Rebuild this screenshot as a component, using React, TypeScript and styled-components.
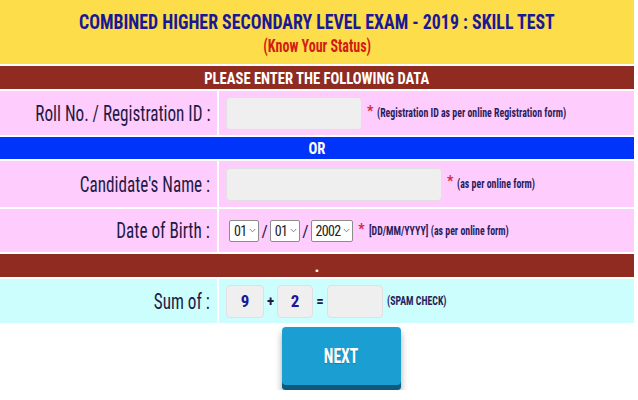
import styled, { createGlobalStyle } from "styled-components";

const GlobalStyle = createGlobalStyle`
  body {
    margin: 0;
    background: #ffffff;
    font-family: "Roboto", "Liberation Sans", sans-serif;
    font-stretch: 75%;
  }
`;

const colors = {
  yellow: "#fedd4b",
  brown: "#8f2b21",
  pink: "#ffccfe",
  blue: "#0034fb",
  cyan: "#ccfefe",
  navy: "#1a1896",
  labelText: "#221a44",
  hintText: "#2b1d5c",
  red: "#d21c12",
  star: "#d8263e",
};

// the screenshot squeezes glyphs horizontally, so every text run is narrowed
const Squeeze = styled.span<{ $origin?: string; $sx?: number }>`
  display: inline-block;
  white-space: nowrap;
  transform: scaleX(${(p) => p.$sx ?? 0.78});
  transform-origin: ${(p) => p.$origin ?? "center"};
`;

const Page = styled.div`
  width: 634px;
  display: flex;
  flex-direction: column;
  gap: 2px;
`;

const Banner = styled.header`
  height: 64px;
  box-sizing: border-box;
  padding-top: 10px;
  background: ${colors.yellow};
  display: flex;
  flex-direction: column;
  align-items: center;
`;

const Title = styled.h1`
  margin: 0;
  font-size: 21px;
  font-weight: bold;
  color: ${colors.navy};
  line-height: 24px;
`;

const SubTitle = styled.div`
  margin-top: 2px;
  font-size: 18px;
  font-weight: bold;
  color: ${colors.red};
  line-height: 20px;
`;

const Bar = styled.div<{ $bg: string; $h: number }>`
  height: ${(p) => p.$h}px;
  background: ${(p) => p.$bg};
  color: #ffffff;
  font-weight: bold;
  font-size: 17px;
  display: flex;
  align-items: center;
  justify-content: center;
`;

const Row = styled.div<{ $h: number }>`
  display: grid;
  grid-template-columns: 217px 1fr;
  column-gap: 2px;
  height: ${(p) => p.$h}px;
`;

const LabelCell = styled.div<{ $bg: string }>`
  background: ${(p) => p.$bg};
  display: flex;
  align-items: center;
  justify-content: flex-end;
  padding-right: 7px;
  font-size: 22px;
  color: ${colors.labelText};
`;

const FieldCell = styled.div<{ $bg: string }>`
  background: ${(p) => p.$bg};
  display: flex;
  align-items: center;
  padding-left: 7px;
  gap: 4px;
`;

const TextInput = styled.div<{ $w: number }>`
  width: ${(p) => p.$w}px;
  height: 33px;
  box-sizing: border-box;
  background: #efefef;
  border: 1px solid #e2dfe2;
  border-radius: 4px;
`;

const Star = styled.span`
  color: ${colors.star};
  font-size: 14px;
  font-weight: bold;
  align-self: flex-start;
  margin: 12px 0 0 1px;
`;

const Hint = styled.span`
  font-size: 12px;
  font-weight: bold;
  color: ${colors.hintText};
`;

const DateGroup = styled.div`
  display: flex;
  align-items: center;
  gap: 3px;
  margin-left: 3px;
`;

const Select = styled.div`
  height: 22px;
  box-sizing: border-box;
  background: #ffffff;
  border: 1px solid #8c8c8c;
  border-radius: 2px;
  display: flex;
  align-items: center;
  gap: 3px;
  padding: 0 2px 0 4px;
  font-size: 14px;
  letter-spacing: -0.7px;
  color: #222222;
`;

const Slash = styled.span`
  font-size: 17px;
  color: ${colors.labelText};
  margin: 0 -1px;
`;

const SumGroup = styled.div`
  display: flex;
  align-items: center;
  gap: 3px;
`;

const NumBox = styled.div<{ $w: number }>`
  width: ${(p) => p.$w}px;
  height: 33px;
  box-sizing: border-box;
  background: #efefef;
  border: 1px solid #e2dfe2;
  border-radius: 4px;
  display: flex;
  align-items: center;
  justify-content: center;
  font-size: 17px;
  font-weight: bold;
  color: ${colors.navy};
`;

const Op = styled.span`
  font-size: 15px;
  font-weight: bold;
  color: ${colors.labelText};
`;

const ButtonRow = styled.div`
  display: flex;
  justify-content: center;
  padding: 2px 0 0 48px;
`;

const NextButton = styled.button`
  width: 119px;
  height: 63px;
  border: none;
  border-radius: 4px;
  background: #1b9ed2;
  box-shadow: 0 -5px 0 #0e5a7b inset, 0 5px 7px rgba(0, 0, 0, 0.35);
  color: #ffffff;
  font-family: inherit;
  font-stretch: inherit;
  font-size: 20px;
  font-weight: bold;
  padding: 0 0 6px;
  text-shadow: 0 1px 1px rgba(0, 0, 0, 0.2);
`;

function Chevron() {
  return (
    <svg width="7" height="5" viewBox="0 0 7 5">
      <path d="M0.8 1 L3.5 3.8 L6.2 1" fill="none" stroke="#777" strokeWidth="0.9" />
    </svg>
  );
}

export default function App() {
  return (
    <>
      <GlobalStyle />
      <Page>
        <Banner>
          <Title>
            <Squeeze $sx={0.85}>COMBINED HIGHER SECONDARY LEVEL EXAM - 2019 : SKILL TEST</Squeeze>
          </Title>
          <SubTitle>
            <Squeeze>(Know Your Status)</Squeeze>
          </SubTitle>
        </Banner>
        <Bar $bg={colors.brown} $h={23}>
          <Squeeze $sx={0.86}>PLEASE ENTER THE FOLLOWING DATA</Squeeze>
        </Bar>
        <Row $h={44}>
          <LabelCell $bg={colors.pink}>
            <Squeeze $origin="right">Roll No. / Registration ID :</Squeeze>
          </LabelCell>
          <FieldCell $bg={colors.pink}>
            <TextInput $w={136} />
            <Star>*</Star>
            <Hint>
              <Squeeze $origin="left" $sx={0.82}>
                (Registration ID as per online Registration form)
              </Squeeze>
            </Hint>
          </FieldCell>
        </Row>
        <Bar $bg={colors.blue} $h={22}>
          <Squeeze $sx={0.86}>OR</Squeeze>
        </Bar>
        <Row $h={46}>
          <LabelCell $bg={colors.pink}>
            <Squeeze $origin="right">Candidate's Name :</Squeeze>
          </LabelCell>
          <FieldCell $bg={colors.pink}>
            <TextInput $w={216} />
            <Star>*</Star>
            <Hint>
              <Squeeze $origin="left" $sx={0.82}>(as per online form)</Squeeze>
            </Hint>
          </FieldCell>
        </Row>
        <Row $h={43}>
          <LabelCell $bg={colors.pink}>
            <Squeeze $origin="right">Date of Birth :</Squeeze>
          </LabelCell>
          <FieldCell $bg={colors.pink}>
            <DateGroup>
              <Select>
                01 <Chevron />
              </Select>
              <Slash>/</Slash>
              <Select>
                01 <Chevron />
              </Select>
              <Slash>/</Slash>
              <Select>
                2002 <Chevron />
              </Select>
            </DateGroup>
            <Star>*</Star>
            <Hint>
              <Squeeze $origin="left" $sx={0.82}>
                [DD/MM/YYYY] (as per online form)
              </Squeeze>
            </Hint>
          </FieldCell>
        </Row>
        <Bar $bg={colors.brown} $h={23}>
          .
        </Bar>
        <Row $h={44}>
          <LabelCell $bg={colors.cyan}>
            <Squeeze $origin="right">Sum of :</Squeeze>
          </LabelCell>
          <FieldCell $bg={colors.cyan}>
            <SumGroup>
              <NumBox $w={38}>9</NumBox>
              <Op>+</Op>
              <NumBox $w={36}>2</NumBox>
              <Op>=</Op>
              <NumBox $w={56} />
            </SumGroup>
            <Hint>
              <Squeeze $origin="left" $sx={0.82}>(SPAM CHECK)</Squeeze>
            </Hint>
          </FieldCell>
        </Row>
        <ButtonRow>
          <NextButton>
            <Squeeze>NEXT</Squeeze>
          </NextButton>
        </ButtonRow>
      </Page>
    </>
  );
}
